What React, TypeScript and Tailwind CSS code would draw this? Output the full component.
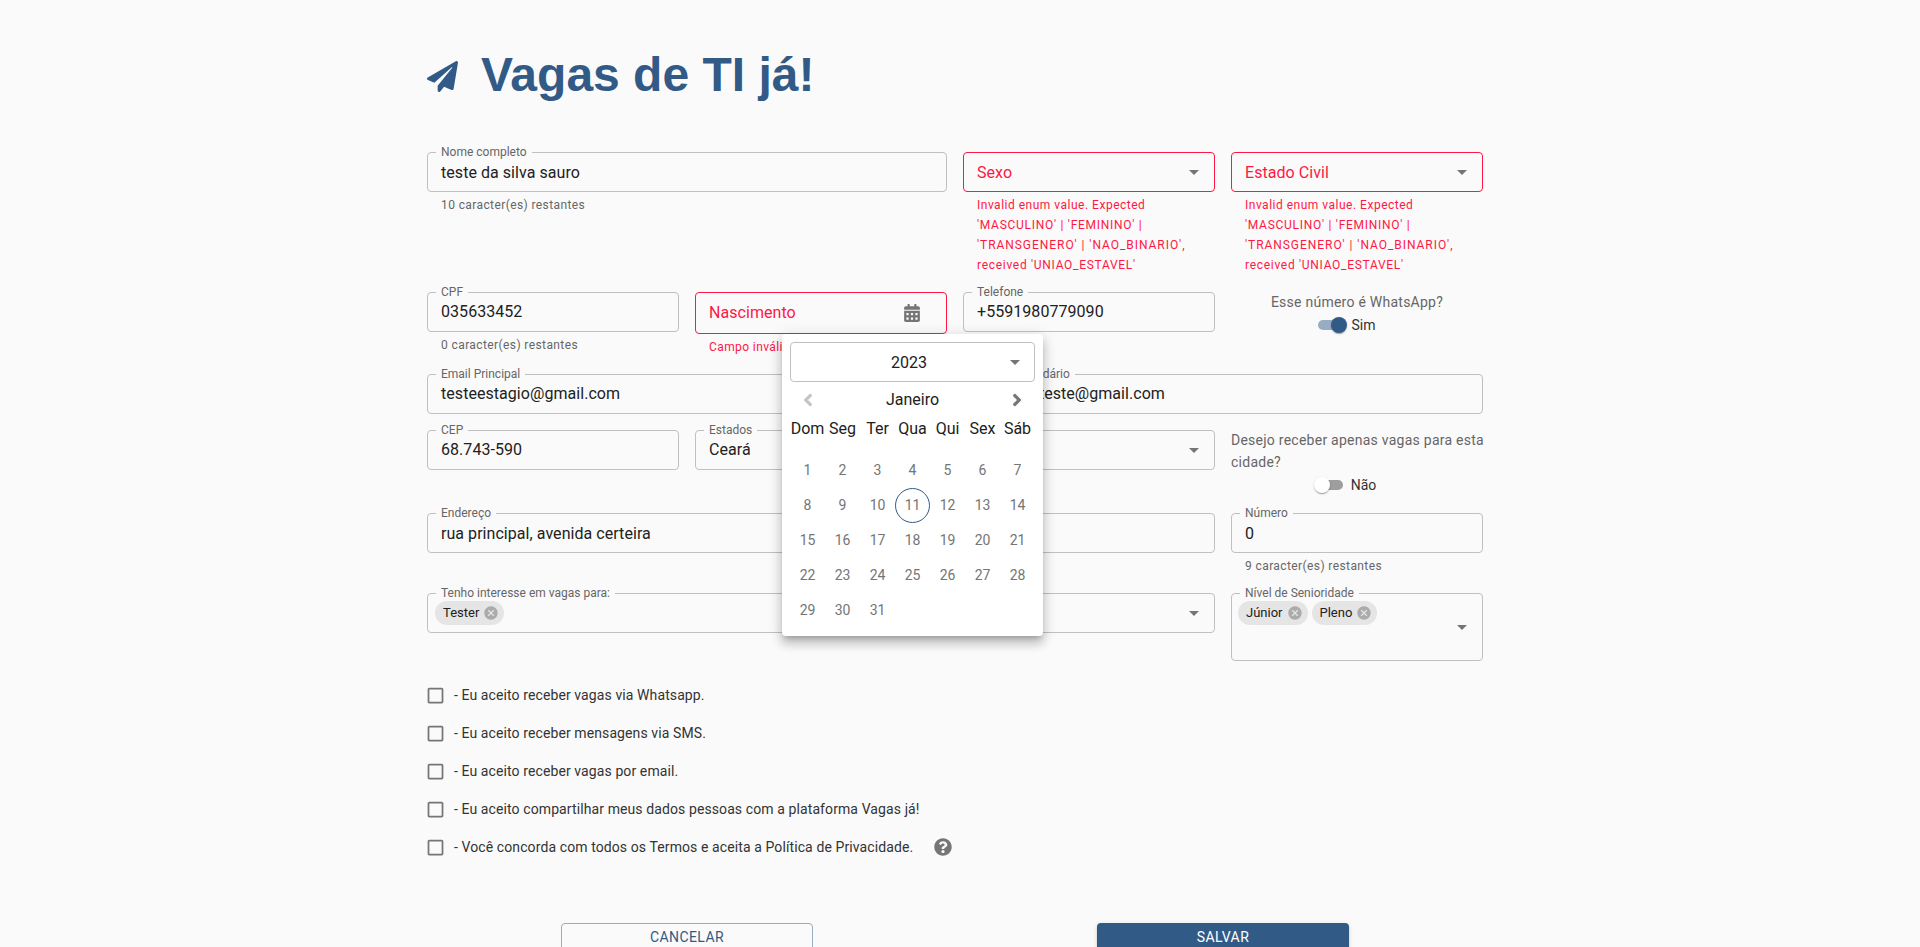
import React from "react";
import { FaPaperPlane, FaCalendarAlt, FaAngleLeft, FaAngleRight, FaQuestionCircle } from "react-icons/fa";

const font = "font-['Roboto','Liberation_Sans',sans-serif]";

function Arrow() {
  return (
    <svg viewBox="0 0 24 24" className="w-6 h-6 fill-[#757575] shrink-0">
      <path d="M7 10l5 5 5-5z" />
    </svg>
  );
}

function Helper({ children, error }: { children: React.ReactNode; error?: boolean }) {
  return (
    <p className={`mt-[3px] mx-[14px] text-[12px] leading-[20px] tracking-[0.4px] ${error ? "text-[#ff1744]" : "text-[#666666]"}`}>
      {children}
    </p>
  );
}

function Field({
  label,
  value,
  select,
  helper,
  span,
  low,
}: {
  label: string;
  value?: string;
  select?: boolean;
  helper?: string;
  span?: string;
  low?: boolean;
}) {
  return (
    <div className={span ?? ""}>
      <div className="relative h-10 flex items-center justify-between pl-[13px] pr-[8px] border border-[#c0c0c0] rounded-[4px]">
        <span className="absolute left-[8px] -top-[8px] px-[5px] bg-[#fafafa] text-[12px] leading-[14px] text-[#666666]">{label}</span>
        <span className={`text-[16px] tracking-[0.05px] text-[#212121] ${low ? "pt-[2px]" : ""}`}>{value}</span>
        {select && <Arrow />}
      </div>
      {helper && <Helper>{helper}</Helper>}
    </div>
  );
}

function ErrorSelect({ label }: { label: string }) {
  return (
    <div>
      <div className="h-10 flex items-center justify-between pl-[13px] pr-[8px] border border-[#ff1744] rounded-[4px]">
        <span className="text-[16px] tracking-[0.05px] pt-[2px] text-[#ff1744]">{label}</span>
        <Arrow />
      </div>
      <Helper error>
        <span className="block whitespace-nowrap tracking-[0.5px]">Invalid enum value. Expected</span>
        <span className="block whitespace-nowrap tracking-[0.72px]">'MASCULINO' | 'FEMININO' |</span>
        <span className="block whitespace-nowrap tracking-[0.95px]">'TRANSGENERO' | 'NAO_BINARIO',</span>
        <span className="block whitespace-nowrap tracking-[0.7px]">received 'UNIAO_ESTAVEL'</span>
      </Helper>
    </div>
  );
}

function Chip({ label }: { label: string }) {
  return (
    <span className="h-6 flex items-center rounded-full bg-[#e5e5e5] pl-2 pr-[5px] gap-[4px] text-[13px] text-[#212121]">
      {label}
      <svg viewBox="0 0 24 24" className="w-4 h-4 fill-[#ababab]">
        <path d="M12 2C6.47 2 2 6.47 2 12s4.47 10 10 10 10-4.47 10-10S17.53 2 12 2zm5 13.59L15.59 17 12 13.41 8.41 17 7 15.59 10.59 12 7 8.41 8.41 7 12 10.59 15.59 7 17 8.41 13.41 12 17 15.59z" />
      </svg>
    </span>
  );
}

function Toggle({ on, label }: { on: boolean; label: string }) {
  return (
    <div className="h-6 pr-[21px] flex items-center justify-center gap-[8px]">
      <span className={`relative w-[26px] h-[10px] rounded-full ${on ? "bg-[#98acc3]" : "bg-[#9e9e9e]"}`}>
        <span
          className={`absolute -top-[3px] w-4 h-4 rounded-full shadow-[0_2px_1px_-1px_rgba(0,0,0,0.2),0_1px_1px_0_rgba(0,0,0,0.14),0_1px_3px_0_rgba(0,0,0,0.12)] ${
            on ? "-right-[3px] bg-[#325a87]" : "-left-[3px] bg-white"
          }`}
        />
      </span>
      <span className="text-[14px] text-[#333333]">{label}</span>
    </div>
  );
}

function CheckRow({ children }: { children: React.ReactNode }) {
  return (
    <div className="h-[38px] flex items-center text-[14px] tracking-[0.1px] text-[#333333]">
      <svg viewBox="0 0 24 24" className="w-[21px] h-[21px] -ml-[2px] mr-[8px] fill-[#757575] shrink-0">
        <path d="M19 5v14H5V5h14m0-2H5c-1.1 0-2 .9-2 2v14c0 1.1.9 2 2 2h14c1.1 0 2-.9 2-2V5c0-1.1-.9-2-2-2z" />
      </svg>
      {children}
    </div>
  );
}

function Calendar() {
  const week = ["Dom", "Seg", "Ter", "Qua", "Qui", "Sex", "Sáb"];
  const days = Array.from({ length: 31 }, (_, i) => i + 1);
  return (
    <div className="absolute left-[355px] top-[334px] w-[261px] h-[302px] bg-white rounded-[4px] px-2 pt-2 shadow-[0px_5px_5px_-3px_rgba(0,0,0,0.2),0px_8px_10px_1px_rgba(0,0,0,0.14),0px_3px_14px_2px_rgba(0,0,0,0.12)]">
      <div className="relative h-10 flex items-center justify-center pr-[7px] pt-[2px] border border-[#c0c0c0] rounded-[4px] text-[16px] text-[#212121]">
        2023
        <span className="absolute right-[7px] top-[7px]">
          <Arrow />
        </span>
      </div>
      <div className="h-[34px] pt-[2px] flex items-center justify-between px-[8px] text-[16px] text-[#212121]">
        <FaAngleLeft className="w-5 h-5 text-[#c4c4c4]" />
        <span>Janeiro</span>
        <FaAngleRight className="w-5 h-5 text-[#757575]" />
      </div>
      <div className="grid grid-cols-7 w-[245px] h-[26px] items-center text-center text-[16px] text-[#212121]">
        {week.map((d) => (
          <span key={d}>{d}</span>
        ))}
      </div>
      <div className="grid grid-cols-7 w-[245px] mt-[11px] text-[14px] text-[#757575]">
        {days.map((d) => (
          <span
            key={d}
            className={`h-[35px] flex items-center justify-center rounded-full ${d === 11 ? "border border-[#325a87]" : ""}`}
          >
            {d}
          </span>
        ))}
      </div>
    </div>
  );
}

export default function App() {
  return (
    <div className={`h-screen overflow-hidden bg-[#fafafa] pr-[10px] ${font}`}>
      <div className="relative mx-auto w-[1056px]">
        <div className="h-[152px] pt-[47px] flex items-start gap-[23px]">
          <FaPaperPlane className="w-[31px] h-[31px] mt-[14px] text-[#325a87]" />
          <h1 className="font-['Liberation_Sans',Arial,sans-serif] font-bold text-[48px] leading-[56px] text-[#325a87]">Vagas de TI já!</h1>
        </div>

        <div className="grid grid-cols-4 gap-x-4 gap-y-4 grid-rows-[124px_66px_40px_67px_64px_68px] items-start">
          <Field label="Nome completo" value="teste da silva sauro" helper="10 caracter(es) restantes" span="col-span-2" low />
          <ErrorSelect label="Sexo" />
          <ErrorSelect label="Estado Civil" />

          <Field label="CPF" value="035633452" helper="0 caracter(es) restantes" />
          <div>
            <div className="h-[42px] flex items-center justify-between pl-[13px] pr-[26px] border border-[#ff1744] rounded-[4px]">
              <span className="text-[16px] tracking-[0.05px] text-[#ff1744]">Nascimento</span>
              <FaCalendarAlt className="w-4 h-[18px] text-[#757575]" />
            </div>
            <Helper error>Campo inválido</Helper>
          </div>
          <Field label="Telefone" value="+5591980779090" />
          <div className="text-center">
            <p className="text-[14px] leading-[20px] tracking-[0.25px] text-[#666666]">Esse número é WhatsApp?</p>
            <div className="mt-[1px]">
              <Toggle on label="Sim" />
            </div>
          </div>

          <Field label="Email Principal" value="testeestagio@gmail.com" span="col-span-2" />
          <Field label="Email Secundário" value="segundoteste@gmail.com" span="col-span-2" />

          <Field label="CEP" value="68.743-590" />
          <Field label="Estados" value="Ceará" select />
          <Field label="Cidade" select />
          <div className="-mt-[1px]">
            <p className="text-[14px] leading-[22px] tracking-[0.25px] text-[#666666] whitespace-nowrap">
              Desejo receber apenas vagas para esta
              <br />
              cidade?
            </p>
            <Toggle on={false} label="Não" />
          </div>

          <Field label="Endereço" value="rua principal, avenida certeira" span="col-span-3" low />
          <Field label="Número" value="0" helper="9 caracter(es) restantes" low />

          <div className="col-span-3 relative h-10 flex items-center justify-between pl-[7px] pr-[8px] border border-[#c0c0c0] rounded-[4px]">
            <span className="absolute left-[8px] -top-[8px] px-[5px] bg-[#fafafa] text-[12px] leading-[14px] text-[#666666]">
              Tenho interesse em vagas para:
            </span>
            <Chip label="Tester" />
            <Arrow />
          </div>
          <div className="relative h-[68px] flex justify-between pl-[6px] pr-[8px] pt-[7px] border border-[#c0c0c0] rounded-[4px]">
            <span className="absolute left-[8px] -top-[8px] px-[5px] bg-[#fafafa] text-[12px] leading-[14px] text-[#666666]">
              Nível de Senioridade
            </span>
            <div className="flex gap-1 items-start">
              <Chip label="Júnior" />
              <Chip label="Pleno" />
            </div>
            <span className="mt-[14px]">
              <Arrow />
            </span>
          </div>
        </div>

        <div className="mt-[15px]">
          <CheckRow>- Eu aceito receber vagas via Whatsapp.</CheckRow>
          <CheckRow>- Eu aceito receber mensagens via SMS.</CheckRow>
          <CheckRow>- Eu aceito receber vagas por email.</CheckRow>
          <CheckRow>- Eu aceito compartilhar meus dados pessoas com a plataforma Vagas já!</CheckRow>
          <CheckRow>
            - Você concorda com todos os Termos e aceita a Política de Privacidade.
            <FaQuestionCircle className="ml-[21px] w-[18px] h-[18px] text-[#757575]" />
          </CheckRow>
        </div>

        <div className="mt-[57px] grid grid-cols-2 gap-x-4 justify-items-center">
          <button className="w-[252px] h-7 rounded-[4px] border border-[#98acc3] text-[14px] tracking-[0.4px] text-[#325a87]">CANCELAR</button>
          <button className="w-[252px] h-7 rounded-[4px] bg-[#325a87] text-[14px] tracking-[0.4px] text-white shadow-[0_3px_1px_-2px_rgba(0,0,0,0.2),0_2px_2px_0_rgba(0,0,0,0.14),0_1px_5px_0_rgba(0,0,0,0.12)]">SALVAR</button>
        </div>

        <Calendar />
      </div>
    </div>
  );
}
